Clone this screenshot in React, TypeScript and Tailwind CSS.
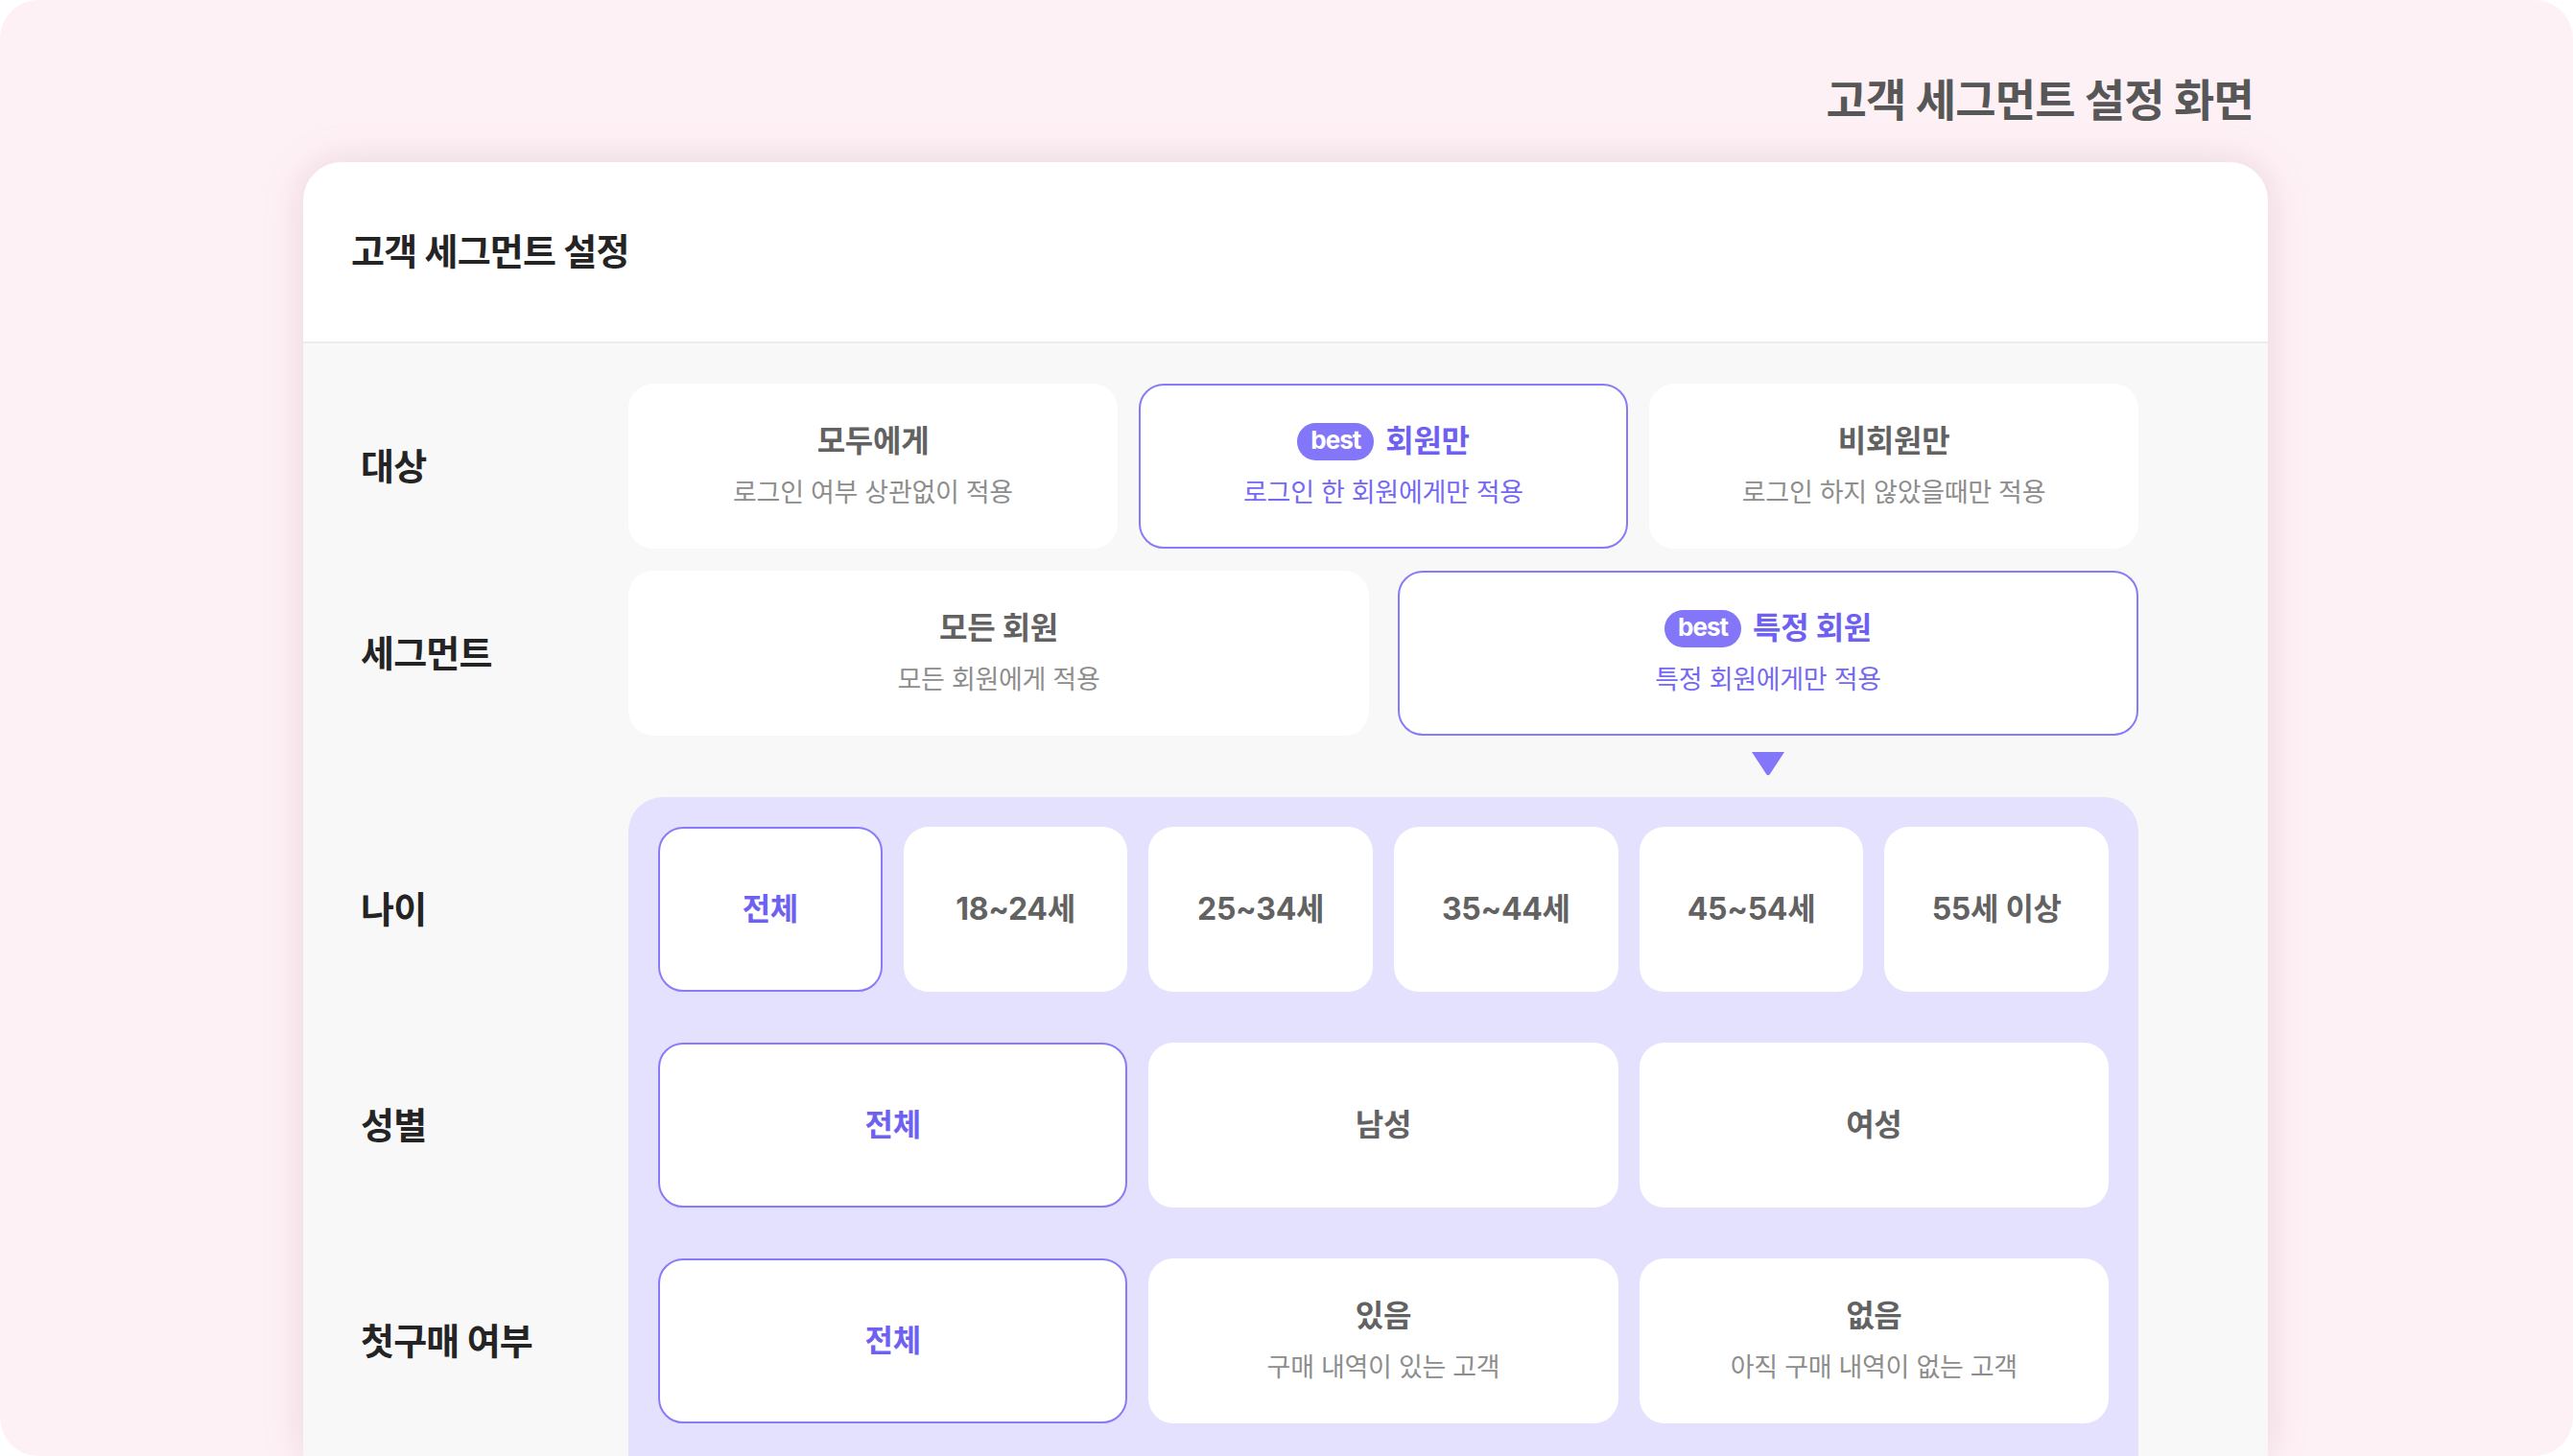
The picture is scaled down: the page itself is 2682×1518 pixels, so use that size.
import { FC } from "react";

type Option = {
  title: string;
  sub?: string;
  best?: boolean;
  active?: boolean;
};

const targets: Option[] = [
  { title: "모두에게", sub: "로그인 여부 상관없이 적용" },
  { title: "회원만", sub: "로그인 한 회원에게만 적용", best: true, active: true },
  { title: "비회원만", sub: "로그인 하지 않았을때만 적용" },
];

const segments: Option[] = [
  { title: "모든 회원", sub: "모든 회원에게 적용" },
  { title: "특정 회원", sub: "특정 회원에게만 적용", best: true, active: true },
];

const ages: Option[] = [
  { title: "전체", active: true },
  { title: "18~24세" },
  { title: "25~34세" },
  { title: "35~44세" },
  { title: "45~54세" },
  { title: "55세 이상" },
];

const genders: Option[] = [
  { title: "전체", active: true },
  { title: "남성" },
  { title: "여성" },
];

const purchases: Option[] = [
  { title: "전체", active: true },
  { title: "있음", sub: "구매 내역이 있는 고객" },
  { title: "없음", sub: "아직 구매 내역이 없는 고객" },
];

const Badge: FC = () => (
  <span className="inline-flex h-[39px] w-[80px] items-center justify-center rounded-full bg-[#8376f8] pb-[2px] text-[26px] font-bold leading-none tracking-[-1px] text-white">
    best
  </span>
);

const OptionCard: FC<Option> = ({ title, sub, best, active }) => (
  <div
    className={`flex h-[172px] flex-col items-center justify-center rounded-[26px] border-2 bg-white ${
      active ? "border-[#877bf9]" : "border-transparent"
    }`}
  >
    <div className="flex items-center gap-[12px]">
      {best && <Badge />}
      <span
        className={`text-[32px] font-bold leading-[40px] tracking-[-0.3px] ${
          active ? "text-[#6e61f1]" : "text-[#626262]"
        }`}
      >
        {title}
      </span>
    </div>
    {sub && (
      <span
        className={`mt-[16px] text-[27px] leading-[36px] tracking-[-0.3px] ${
          active ? "text-[#7568f4]" : "text-[#8d8d8d]"
        }`}
      >
        {sub}
      </span>
    )}
  </div>
);

const Label: FC<{ text: string }> = ({ text }) => (
  <div className="flex h-[172px] w-[279px] shrink-0 items-center text-[38px] font-bold tracking-[-0.8px] text-[#242424]">
    {text}
  </div>
);

const App: FC = () => {
  return (
    <div className="h-[1518px] w-[2682px] overflow-hidden bg-white font-[family-name:Inter,'Noto_Sans_CJK_KR',sans-serif]">
      <div className="flex h-full flex-col overflow-hidden rounded-[40px] bg-[#fef1f5]">
        {/* page caption */}
        <div className="flex justify-end pr-[333px] pt-[76px]">
          <h1 className="text-[46px] font-bold leading-[56px] tracking-[-0.8px] text-[#575757]">
            고객 세그먼트 설정 화면
          </h1>
        </div>

        {/* settings card */}
        <div className="ml-[316px] mt-[37px] flex w-[2048px] flex-1 flex-col overflow-hidden rounded-t-[40px] bg-white shadow-[0_0_40px_rgba(160,110,135,0.22)]">
          <div className="flex h-[189px] shrink-0 items-center border-b-2 border-[#ececf0] px-[50px]">
            <h2 className="text-[38px] font-bold tracking-[-0.8px] text-[#242424]">고객 세그먼트 설정</h2>
          </div>

          <div className="flex-1 bg-[#f8f8f8] pl-[60px] pt-[42px]">
            {/* 대상 */}
            <div className="flex">
              <Label text="대상" />
              <div className="grid w-[1574px] grid-cols-3 gap-[22px]">
                {targets.map((o) => (
                  <OptionCard key={o.title} {...o} />
                ))}
              </div>
            </div>

            {/* 세그먼트 */}
            <div className="mt-[23px] flex">
              <Label text="세그먼트" />
              <div className="grid w-[1574px] grid-cols-2 gap-[30px]">
                {segments.map((o) => (
                  <OptionCard key={o.title} {...o} />
                ))}
              </div>
            </div>

            {/* pointer to detail panel */}
            <div className="flex">
              <div className="w-[279px] shrink-0" />
              <div className="grid w-[1574px] grid-cols-2 gap-[30px] pb-[22px] pt-[16px]">
                <div />
                <div className="flex justify-center">
                  <svg width="36" height="26" viewBox="0 0 36 26">
                    <path d="M1 1 H35 L19.6 24.4 Q18 26 16.4 24.4 Z" fill="#8376f8" />
                  </svg>
                </div>
              </div>
            </div>

            {/* detail panel */}
            <div className="flex">
              <div className="flex w-[279px] shrink-0 flex-col gap-[53px] pt-[31px]">
                <Label text="나이" />
                <Label text="성별" />
                <Label text="첫구매 여부" />
              </div>
              <div className="flex w-[1574px] flex-col gap-[53px] rounded-t-[36px] bg-[#e4e1fe] px-[31px] pb-[80px] pt-[31px]">
                <div className="grid grid-cols-6 gap-[22px]">
                  {ages.map((o) => (
                    <OptionCard key={o.title} {...o} />
                  ))}
                </div>
                <div className="grid grid-cols-3 gap-[22px]">
                  {genders.map((o) => (
                    <OptionCard key={o.title} {...o} />
                  ))}
                </div>
                <div className="grid grid-cols-3 gap-[22px]">
                  {purchases.map((o) => (
                    <OptionCard key={o.title} {...o} />
                  ))}
                </div>
              </div>
            </div>
          </div>
        </div>
      </div>
    </div>
  );
};

export default App;
